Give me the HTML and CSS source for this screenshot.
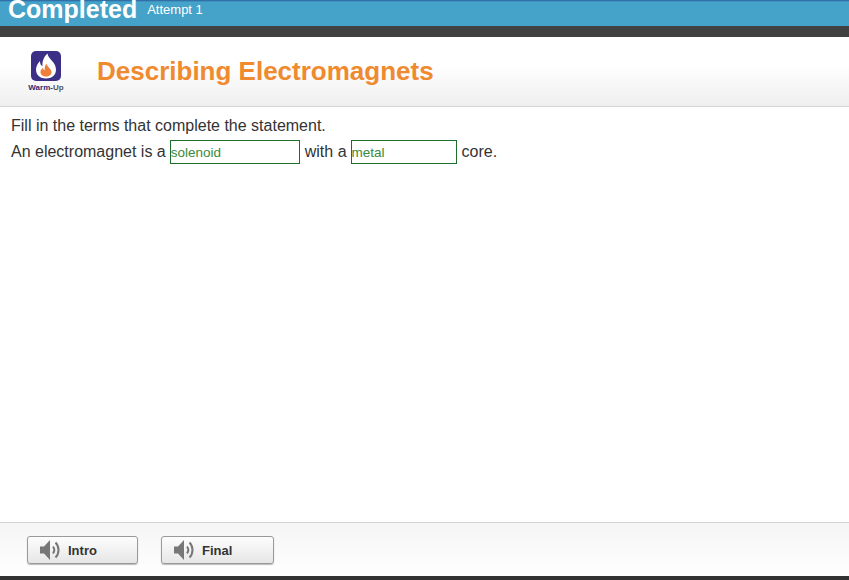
FILE: index.html
```html
<!DOCTYPE html>
<html lang="en">

<head>
  <meta charset="UTF-8">
  <meta name="viewport" content="width=device-width, initial-scale=1.0">
  <title>Describing Electromagnets</title>
  <link rel="stylesheet" href="styles.css">
</head>

<body>
  <div class="statusbar">
    <span class="status">Completed</span>
    <span class="attempt">Attempt 1</span>
  </div>
  <div class="darkbar"></div>

  <div class="header">
    <div class="badge">
      <svg class="badgeicon" viewBox="0 0 30 30" width="30" height="30">
        <rect width="30" height="30" rx="5" fill="#3b2f86"/>
        <path d="M16.500 2.500C17 8 25 11 25 18.500C25 24.500 20.500 27.500 15 27.500C9.500 27.500 5 24.500 5 18.500C5 15 7 12 9 10C9 13 10 14.500 11.500 15C11 10.500 13 5.500 16.500 2.500Z" fill="#fff"/>
        <path d="M15.500 12.500C16 16 20.500 17.500 20.500 21C20.500 23.800 18.300 25.500 15 25.500C11.700 25.500 9.500 23.600 9.500 21C9.500 19.300 10.500 18 12 17C12.200 18.300 12.800 19 13.700 19.300C13.500 16.800 14 14.500 15.500 12.500Z" fill="#ee7f3a"/>
      </svg>
      <div class="badgelabel"><span class="warm">Warm-</span><span class="up">Up</span></div>
    </div>
    <h1>Describing Electromagnets</h1>
  </div>

  <div class="content">
    <p class="line">Fill in the terms that complete the statement.</p>
    <p class="line sentence">
      <span>An electromagnet is a</span>
      <input class="answer wide" type="text" value="solenoid" readonly>
      <span>with a</span>
      <input class="answer narrow" type="text" value="metal" readonly>
      <span>core.</span>
    </p>
  </div>

  <div class="footer">
    <button class="audiobtn intro" type="button">
      <svg viewBox="0 0 22 22" width="22" height="22">
        <path d="M1 7.500H5L11 1V21L5 14.500H1Z" fill="#777"/>
        <path d="M14 7.500C15.500 9.500 15.500 12.500 14 14.500" fill="none" stroke="#777" stroke-width="2"/>
        <path d="M16.500 3.500C20.500 7.500 20.500 14.500 16.500 18.500" fill="none" stroke="#777" stroke-width="2"/>
      </svg>
      Intro
    </button>
    <button class="audiobtn final" type="button">
      <svg viewBox="0 0 22 22" width="22" height="22">
        <path d="M1 7.500H5L11 1V21L5 14.500H1Z" fill="#777"/>
        <path d="M14 7.500C15.500 9.500 15.500 12.500 14 14.500" fill="none" stroke="#777" stroke-width="2"/>
        <path d="M16.500 3.500C20.500 7.500 20.500 14.500 16.500 18.500" fill="none" stroke="#777" stroke-width="2"/>
      </svg>
      Final
    </button>
  </div>
</body>

</html>
```

FILE: styles.css
```css
html,
body {
  height: 100%;
}

body {
  margin: 0;
  display: flex;
  flex-direction: column;
  overflow: hidden;
  background-color: #fff;
  color: #333;
  font-family: "Liberation Sans", Arial, sans-serif;
}

.statusbar {
  height: 26px;
  flex: none;
  display: flex;
  align-items: flex-end;
  gap: 10px;
  box-sizing: border-box;
  padding: 0 0 4px 8px;
  overflow: hidden;
  color: #fff;
  background: linear-gradient(#2b5f9e 0, #45a2c8 2px, #45a2c8 100%);
}

.status {
  font-size: 25px;
  font-weight: bold;
  line-height: 25px;
}

.attempt {
  font-size: 13px;
  line-height: 24px;
}

.darkbar {
  height: 11px;
  flex: none;
  background-color: #414141;
}

.header {
  height: 70px;
  flex: none;
  display: flex;
  align-items: center;
  box-sizing: border-box;
  padding-left: 27px;
  border-bottom: 1px solid #d4d4d4;
  background: linear-gradient(#fff 40%, #efefef);
}

.badge {
  width: 38px;
  display: flex;
  flex-direction: column;
  align-items: center;
}

.badgeicon {
  display: block;
}

.badgelabel {
  margin-top: 2px;
  font-size: 8px;
  font-weight: bold;
  line-height: 10px;
  white-space: nowrap;
}

.warm {
  color: #33296f;
}

.up {
  color: #555;
}

h1 {
  margin: 0 0 0 32px;
  font-size: 26px;
  font-weight: bold;
  color: #f08a2e;
}

.content {
  flex: 1;
  padding: 10px 11px 0;
}

.line {
  margin: 0;
  font-size: 16px;
  line-height: 18px;
}

.sentence {
  display: flex;
  align-items: center;
  gap: 5px;
  margin-top: 5px;
}

.answer {
  height: 24px;
  box-sizing: border-box;
  margin: 0 0 0 -1px;
  padding: 0;
  border: 1px solid #1c6e2a;
  background-color: #fff;
  color: #3a8a3a;
  font-family: "Liberation Sans", Arial, sans-serif;
  font-size: 13.5px;
  outline: none;
}

.wide {
  width: 130px;
}

.narrow {
  width: 106px;
}

.footer {
  height: 58px;
  flex: none;
  display: flex;
  box-sizing: border-box;
  gap: 23px;
  padding: 13px 0 0 27px;
  border-top: 1px solid #d4d4d4;
  border-bottom: 4px solid #333;
  background: linear-gradient(#f5f5f5, #fff);
}

.audiobtn {
  height: 28px;
  display: flex;
  align-items: center;
  gap: 7px;
  padding: 0 0 0 11px;
  border: 1px solid #999;
  border-radius: 3px;
  box-shadow: 0 1px 1px #bbb;
  background: linear-gradient(#fdfdfd, #e6e6e6);
  color: #333;
  font-family: "Liberation Sans", Arial, sans-serif;
  font-size: 13px;
  font-weight: bold;
}

.intro {
  width: 111px;
}

.final {
  width: 113px;
}
```
